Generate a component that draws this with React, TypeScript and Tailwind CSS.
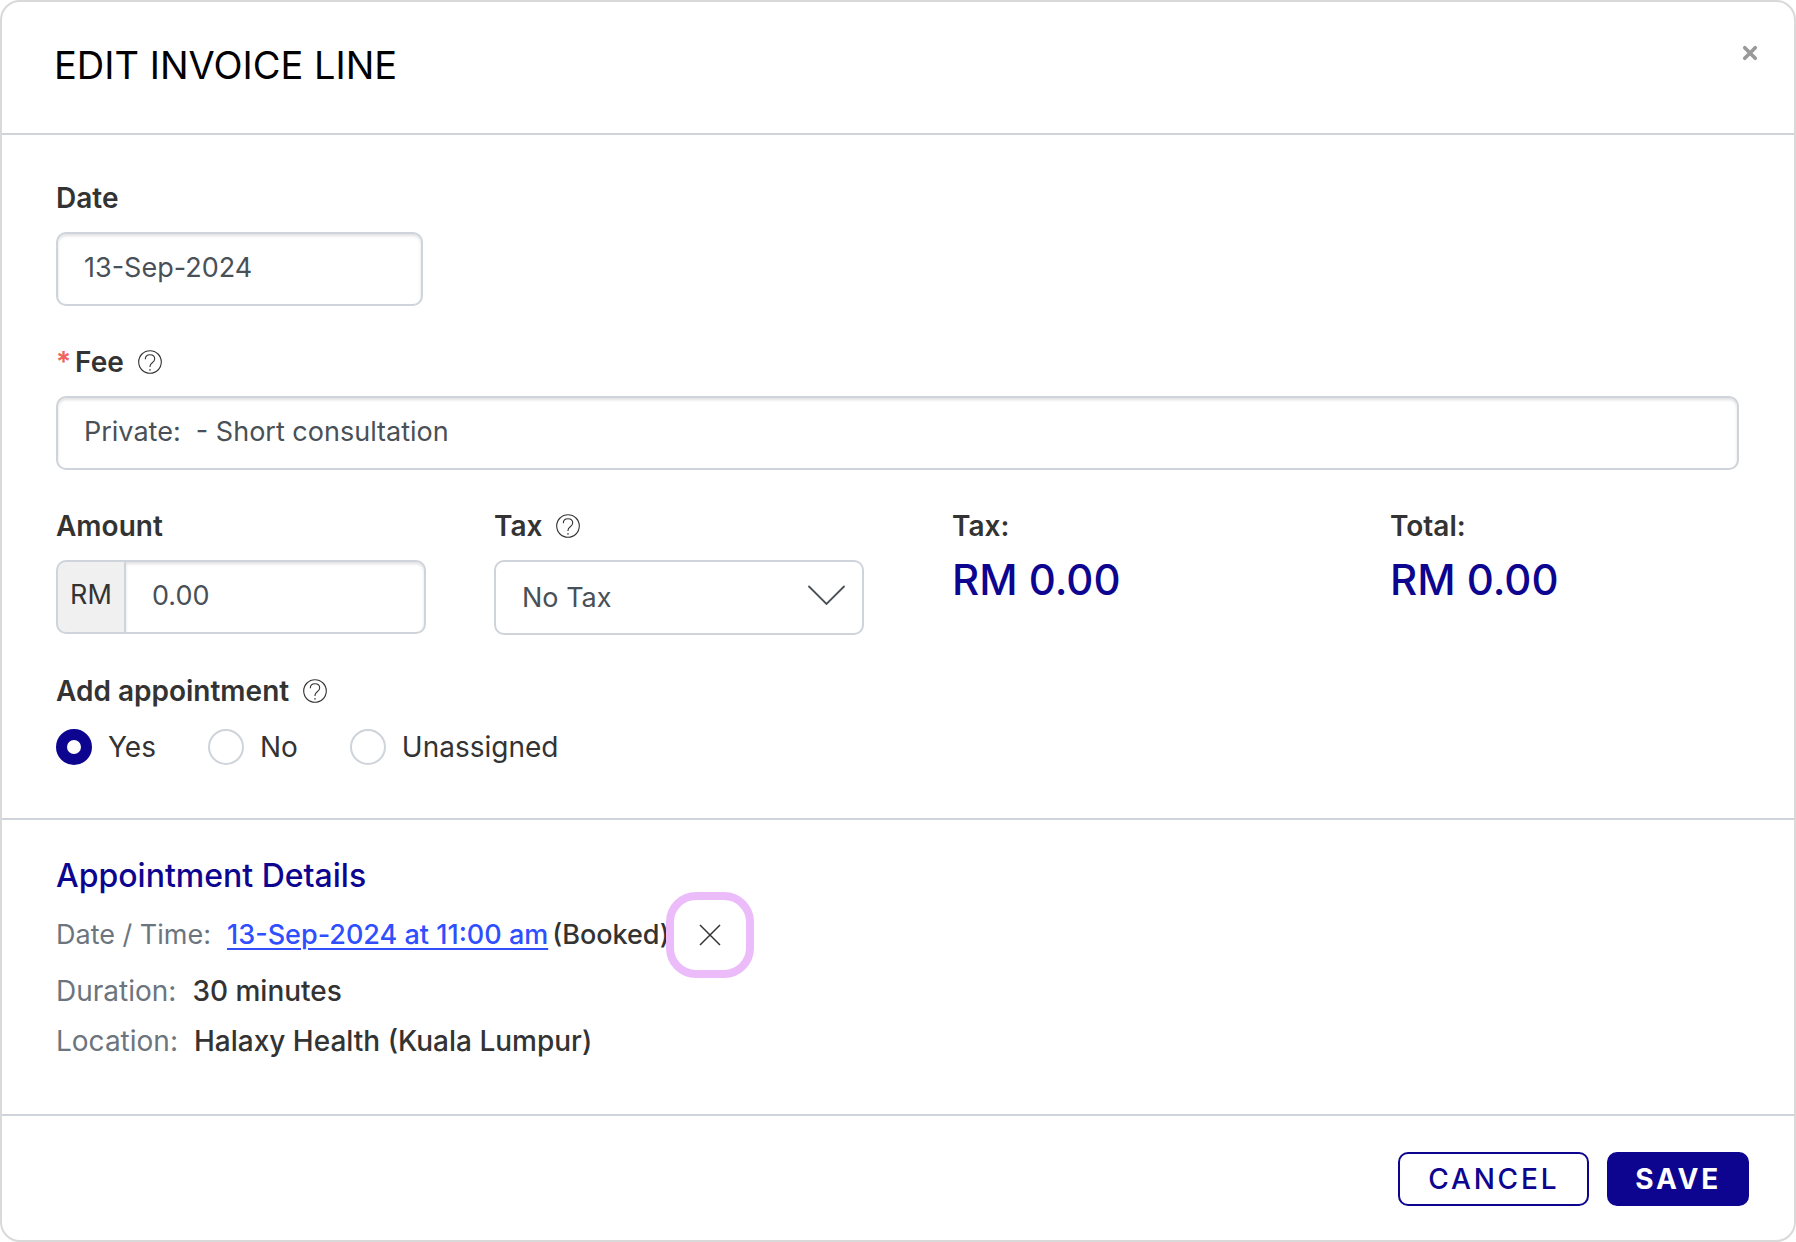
import { useState } from "react";
import type { ReactNode } from "react";
import clsx from "clsx";

const appointmentOptions = ["Yes", "No", "Unassigned"];

const inputClass =
  "h-[74px] w-full rounded-[10px] border-2 border-[#ced4da] bg-white px-[26px] pb-1 text-[#495057] shadow-[inset_0_2px_3px_rgba(0,0,0,0.12)] outline-none focus:border-[#0d058f]";

function HelpButton({ topic }: { topic: string }) {
  return (
    <button type="button" aria-label={`Help: ${topic}`} className="ml-[14px] text-[#333333]">
      <svg className="h-6 w-6" viewBox="0 0 24 24" fill="none" stroke="currentColor" strokeWidth="1.1">
        <circle cx="12" cy="12" r="11.3" />
        <path d="M7.3 9.2C7.3 6.5 9.3 4.7 12 4.7s4.7 1.8 4.7 4.3c0 3.7-4.7 3.8-4.7 7.2v.8" />
        <path d="M12 19v1.8" />
      </svg>
    </button>
  );
}

function FieldLabel({ htmlFor, help, required, children }: {
  htmlFor: string;
  help?: string;
  required?: boolean;
  children: ReactNode;
}) {
  return (
    <div className="mb-[14px] flex h-10 items-center text-[28px] font-semibold text-[#333333]">
      {required && <span className="mr-1 text-[#f0625d]">*</span>}
      <label htmlFor={htmlFor}>{children}</label>
      {help && <HelpButton topic={help} />}
    </div>
  );
}

function Total({ label, value }: { label: string; value: string }) {
  return (
    <div className="flex-1">
      <p className="flex h-10 items-center text-[28px] font-semibold text-[#333333]">{label}</p>
      <p className="text-[42px] leading-[68px] font-medium text-[#0d058f]">{value}</p>
    </div>
  );
}

export default function App() {
  const [date, setDate] = useState("13-Sep-2024");
  const [fee, setFee] = useState("Private:  - Short consultation");
  const [amount, setAmount] = useState("0.00");
  const [tax, setTax] = useState("No Tax");
  const [addAppointment, setAddAppointment] = useState("Yes");

  return (
    <form
      onSubmit={(e) => e.preventDefault()}
      className="flex min-h-screen flex-col rounded-[20px] border-2 border-[#d9d9d9] bg-white font-['Inter',sans-serif] text-[27px] leading-10 text-[#333333]"
    >
      {/* Header */}
      <header className="flex items-start justify-between border-b-2 border-[#ced4da] pt-[31px] pr-7 pb-9 pl-[52px]">
        <h1 className="text-[38px] leading-[64px] text-black">EDIT INVOICE LINE</h1>
        <button type="button" aria-label="Close" className="p-2 text-[#999999]">
          <svg className="mt-1 h-4 w-4" viewBox="0 0 14 14" stroke="currentColor" strokeWidth="3.2" strokeLinecap="round">
            <path d="M2.4 2.4l9.2 9.2M11.6 2.4l-9.2 9.2" />
          </svg>
        </button>
      </header>

      {/* Invoice line */}
      <section className="border-b-2 border-[#ced4da] pt-[43px] pb-[53px]">
        <div className="flex flex-col gap-9">
          <div className="pr-[55px] pl-[54px]">
            <FieldLabel htmlFor="date">Date</FieldLabel>
            <div className="w-[367px]">
              <input id="date" value={date} onChange={(e) => setDate(e.target.value)} className={inputClass} />
            </div>
          </div>

          <div className="pr-[55px] pl-[54px]">
            <FieldLabel htmlFor="fee" help="Fee" required>Fee</FieldLabel>
            <input id="fee" value={fee} onChange={(e) => setFee(e.target.value)} className={inputClass} />
          </div>

          <div className="flex">
            <div className="flex w-1/2 gap-[68px] pr-[34px] pl-[54px]">
              <div className="flex-1">
                <FieldLabel htmlFor="amount">Amount</FieldLabel>
                <div className="flex">
                  <span className="flex w-[68px] shrink-0 items-center justify-center rounded-l-[10px] border-2 border-r-0 border-[#ced4da] bg-[#f0f0f0] pb-1">
                    RM
                  </span>
                  <input
                    id="amount"
                    value={amount}
                    onChange={(e) => setAmount(e.target.value)}
                    className={clsx(inputClass, "min-w-0 rounded-l-none")}
                  />
                </div>
              </div>
              <div className="flex-1">
                <FieldLabel htmlFor="tax" help="Tax">Tax</FieldLabel>
                <div className="relative">
                  <select
                    id="tax"
                    value={tax}
                    onChange={(e) => setTax(e.target.value)}
                    className="h-[75px] w-full appearance-none rounded-[10px] border-2 border-[#ced4da] bg-white px-[26px] text-[#495057] outline-none"
                  >
                    <option>No Tax</option>
                  </select>
                  <svg className="pointer-events-none absolute top-[25px] right-[18px] h-5 w-[38px]" viewBox="0 0 38 20" fill="none" stroke="#495057" strokeWidth="1.8" strokeLinecap="round">
                    <path d="M1 1.5l17.5 17.5L36 1.5" />
                  </svg>
                </div>
              </div>
            </div>
            <div className="flex w-1/2 gap-[68px] pr-[34px] pl-[54px]">
              <Total label="Tax:" value="RM 0.00" />
              <Total label="Total:" value="RM 0.00" />
            </div>
          </div>

          <fieldset className="pr-[55px] pl-[54px] text-[28px]">
            <div className="mb-[18px] flex h-10 items-center">
              <legend className="font-semibold">Add appointment</legend>
              <HelpButton topic="Add appointment" />
            </div>
            <div className="flex gap-[52px]">
              {appointmentOptions.map((option) => (
                <label key={option} className="flex h-9 items-center gap-4">
                  <input
                    type="radio"
                    name="appointment"
                    checked={addAppointment === option}
                    onChange={() => setAddAppointment(option)}
                    className="h-9 w-9 appearance-none rounded-full border-2 border-[#ced4da] bg-white checked:border-[11px] checked:border-[#0d058f]"
                  />
                  {option}
                </label>
              ))}
            </div>
          </fieldset>
        </div>
      </section>

      {/* Appointment details */}
      <section className="flex-1 border-b-2 border-[#ced4da] px-[54px] pt-9">
        <h2 className="text-[32px] leading-10 font-medium text-[#0d058f]">Appointment Details</h2>
        <div className="-mt-1 flex h-[86px] items-center">
          <span className="mr-4 text-[#6c757d]">Date / Time:</span>
          <a href="#appointment" className="font-medium text-[#2f4fff] underline decoration-2 underline-offset-4">
            13-Sep-2024 at 11:00 am
          </a>
          <span className="ml-1 font-medium">(Booked)</span>
          <button
            type="button"
            aria-label="Remove appointment"
            className="-ml-1 flex h-[86px] w-[88px] items-center justify-center rounded-[30px] border-8 border-[#ecbbfa] bg-white"
          >
            <svg className="h-[22px] w-[22px]" viewBox="0 0 22 22" stroke="#333333" strokeWidth="1.5">
              <path d="M1 1l20 20M21 1L1 21" />
            </svg>
          </button>
        </div>
        <dl className="-mt-3 text-[28px]">
          <div className="flex h-[50px] items-center gap-4">
            <dt className="text-[#6c757d]">Duration:</dt>
            <dd className="font-medium">30 minutes</dd>
          </div>
          <div className="flex h-[50px] items-center gap-4">
            <dt className="text-[#6c757d]">Location:</dt>
            <dd className="font-medium">Halaxy Health (Kuala Lumpur)</dd>
          </div>
        </dl>
      </section>

      {/* Actions */}
      <footer className="flex justify-end gap-[18px] pt-9 pr-[45px] pb-[34px] text-[28px]">
        <button type="button" className="h-[54px] rounded-[10px] border-2 border-[#0d058f] px-7 font-medium tracking-widest text-[#0d058f]">
          CANCEL
        </button>
        <button type="submit" className="h-[54px] rounded-[10px] bg-[#0d058f] px-7 font-bold tracking-widest text-white">
          SAVE
        </button>
      </footer>
    </form>
  );
}
